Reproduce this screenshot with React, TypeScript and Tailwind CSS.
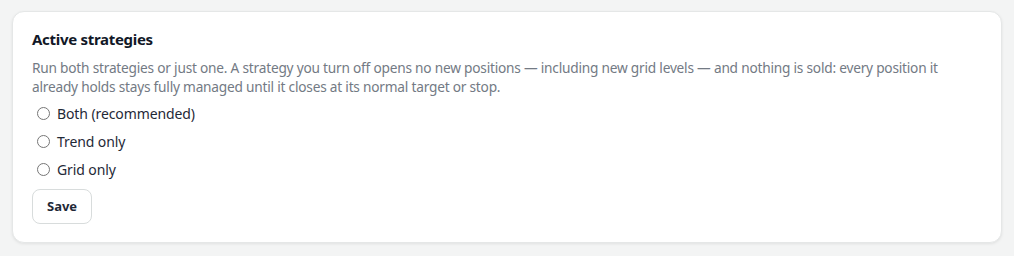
import React, { useState } from 'react';

const options = [
  { id: 'both', label: 'Both (recommended)' },
  { id: 'trend', label: 'Trend only' },
  { id: 'grid', label: 'Grid only' },
];

export default function App() {
  const [mode, setMode] = useState<string | null>(null);

  return (
    <div
      className="min-h-screen bg-[#f3f4f4] px-3 pt-[11px] pb-4"
      style={{ fontFamily: '"Noto Sans", "Open Sans", sans-serif' }}
    >
      <div className="bg-white rounded-xl border border-[#e5e7e7] shadow-[0_1px_3px_rgba(0,0,0,0.08)] px-[19px] pt-[16px] pb-[18px]">
        <h2 className="text-[15px] font-bold tracking-[-0.3px] text-[#111827] leading-[22px]">Active strategies</h2>
        <p className="mt-[8px] text-[13.7px] tracking-[-0.22px] leading-[19px] text-[#737a84]">
          Run both strategies or just one. A strategy you turn off opens no new positions — including new grid levels — and nothing is sold: every position it already holds stays fully managed until it closes at its normal target or stop.
        </p>
        <div className="mt-[3px] flex flex-col">
          {options.map((o) => (
            <label key={o.id} className="flex items-center gap-[7px] h-[28px] pl-[5px] text-[14px] tracking-[-0.1px] text-[#1f2937] cursor-pointer">
              <input
                type="radio"
                name="mode"
                checked={mode === o.id}
                onChange={() => setMode(o.id)}
                className="w-[13px] h-[13px] m-0"
              />
              {o.label}
            </label>
          ))}
        </div>
        <button className="mt-[6px] h-[35px] px-[14px] rounded-lg border border-[#d8dcdc] bg-white text-[13px] font-bold text-[#1f2937]">
          Save
        </button>
      </div>
    </div>
  );
}
